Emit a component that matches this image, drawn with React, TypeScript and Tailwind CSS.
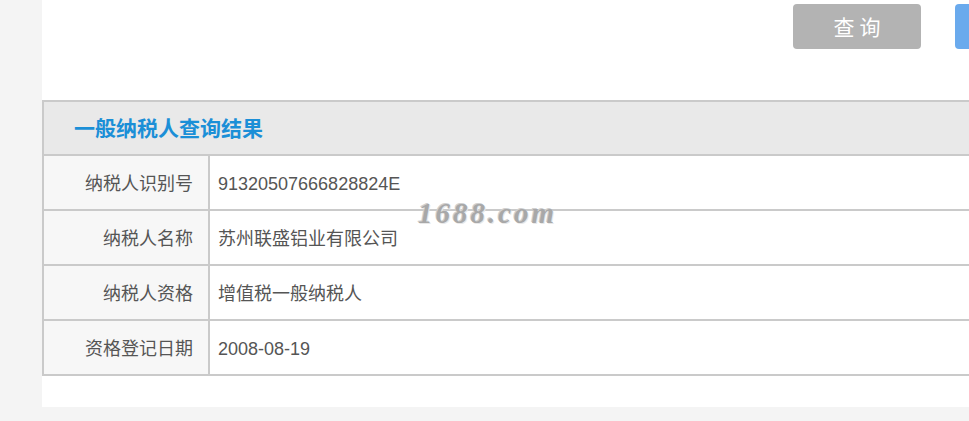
import React from 'react';

const rows = [
  { label: '纳税人识别号', value: '91320507666828824E' },
  { label: '纳税人名称', value: '苏州联盛铝业有限公司' },
  { label: '纳税人资格', value: '增值税一般纳税人' },
  { label: '资格登记日期', value: '2008-08-19' },
];

const cjk = { fontFamily: '"Liberation Sans", "Noto Sans CJK SC", sans-serif' };

export default function App() {
  return (
    <div className="relative w-[969px] h-[421px] overflow-hidden bg-[#f4f4f4]" style={cjk}>
      <div className="ml-[42px] w-[1100px] h-[407px] bg-white flex flex-col">
        {/* 按钮区 */}
        <div className="flex h-[100px] pt-[4px] pl-[751px] gap-[34px]">
          <button className="w-[128px] h-[45px] rounded-[4px] bg-[#b3b3b3] text-white text-[21px] tracking-[5px] pl-[5px] pt-[2px]">
            查询
          </button>
          <div className="w-[128px] h-[45px] rounded-[4px] bg-[#6aaaed]" />
        </div>

        {/* 结果表格 */}
        <div className="border-l-2 border-[#cacaca]">
          <div className="h-[56px] border-y-2 border-[#cacaca] bg-[#e9e9e9] flex items-center pl-[30px] pt-[1px]">
            <span className="text-[21px] font-bold text-[#1b8fd7]">一般纳税人查询结果</span>
          </div>
          {rows.map((row) => (
            <div key={row.label} className="flex h-[55px] border-b-2 border-[#cacaca]">
              <div className="w-[166px] shrink-0 bg-[#f7f7f7] border-r-2 border-[#cacaca] flex items-center justify-end pr-[15px] pt-[3px] text-[18px] text-[#555]">
                {row.label}
              </div>
              <div className="flex-1 flex items-center pl-[8px] pt-[3px] text-[18px] text-[#555]">
                {row.value}
              </div>
            </div>
          ))}
        </div>
      </div>

      {/* 水印 */}
      <div
        className="absolute left-[418px] top-[192px] text-[29px] font-bold italic tracking-[3px] text-[#a8a8a8] pointer-events-none"
        style={{ fontFamily: '"Liberation Serif", serif', textShadow: '1px 1px 0 #e8e8e8, -1px -1px 0 #d0d0d0' }}
      >
        1688.com
      </div>
    </div>
  );
}
